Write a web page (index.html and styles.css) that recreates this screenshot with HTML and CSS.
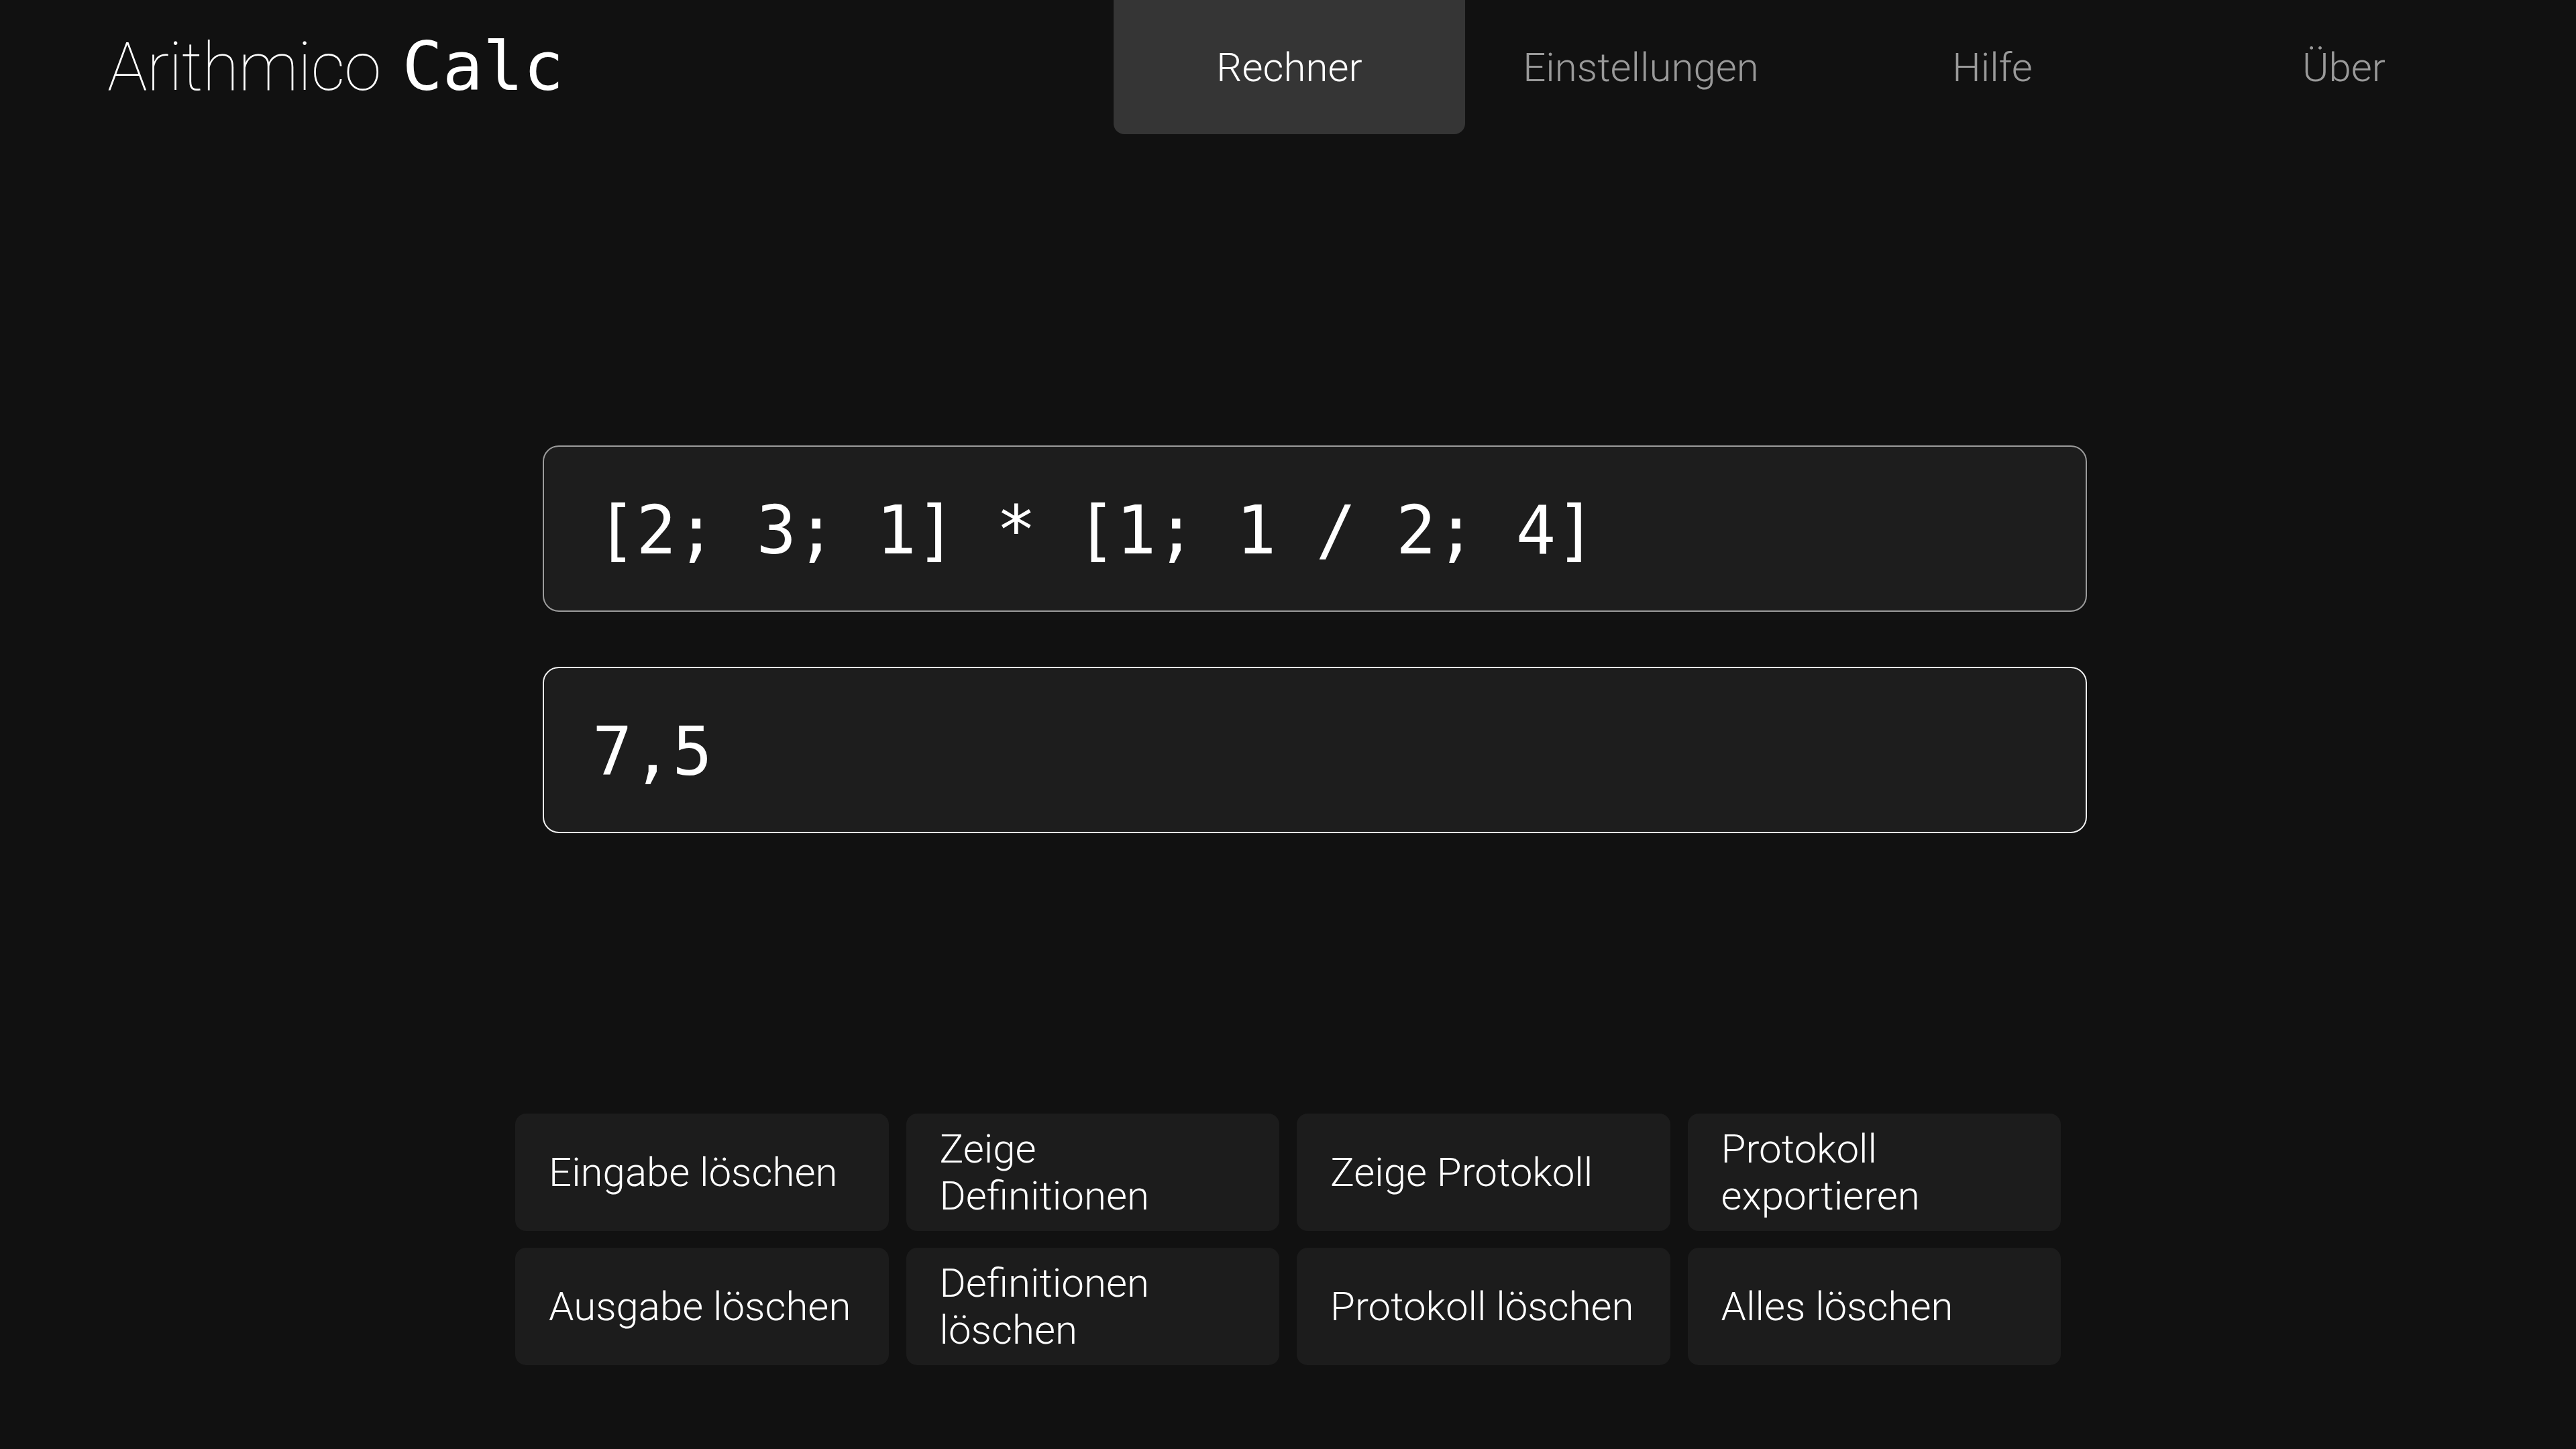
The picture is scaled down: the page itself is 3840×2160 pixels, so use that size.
FILE: index.html
```html
<!DOCTYPE html>
<html lang="de">
<head>
<meta charset="utf-8">
<title>Arithmico Calc</title>
<link rel="stylesheet" href="styles.css">
</head>
<body>
<header class="header">
  <div class="logo"><span class="logo-name">Arithmico</span> <span class="logo-calc">Calc</span></div>
  <nav class="nav">
    <a class="nav-item active">Rechner</a>
    <a class="nav-item">Einstellungen</a>
    <a class="nav-item">Hilfe</a>
    <a class="nav-item">Über</a>
  </nav>
</header>
<main class="main">
  <section class="displays">
    <div class="display input">[2; 3; 1] * [1; 1 / 2; 4]</div>
    <div class="display output">7,5</div>
  </section>
  <section class="actions">
    <button class="action">Eingabe löschen</button>
    <button class="action">Zeige Definitionen</button>
    <button class="action">Zeige Protokoll</button>
    <button class="action">Protokoll exportieren</button>
    <button class="action">Ausgabe löschen</button>
    <button class="action">Definitionen löschen</button>
    <button class="action">Protokoll löschen</button>
    <button class="action">Alles löschen</button>
  </section>
</main>
</body>
</html>
```
FILE: styles.css
```css
html, body {
  margin: 0;
  padding: 0;
}
body {
  background: #111111;
  color: #ffffff;
  font-family: Roboto, "Noto Sans", sans-serif;
  font-weight: 300;
  width: 3840px;
  height: 2160px;
  overflow: hidden;
}
.header {
  height: 200px;
  display: flex;
  align-items: center;
  justify-content: space-between;
  padding: 0 84px 0 160px;
}
.logo {
  font-size: 100px;
  line-height: 1;
  white-space: nowrap;
  color: #ffffff;
  word-spacing: 8px;
}
.logo-name {
  font-family: Roboto, sans-serif;
  font-weight: 100;
  letter-spacing: -1px;
}
.logo-calc {
  font-family: "DejaVu Sans Mono", monospace;
  font-weight: 400;
  font-size: 100px;
}
.nav {
  display: flex;
  align-self: stretch;
}
.nav-item {
  width: 524px;
  display: flex;
  align-items: center;
  justify-content: center;
  font-size: 60px;
  color: #9a9a9a;
  border-radius: 0 0 16px 16px;
}
.nav-item.active {
  background: #353535;
  color: #ffffff;
}
.main {
  display: flex;
  flex-direction: column;
  align-items: center;
}
.displays {
  width: 2304px;
  margin-top: 464px;
  display: flex;
  flex-direction: column;
  gap: 82px;
}
.display {
  box-sizing: border-box;
  height: 248px;
  margin-left: 41px;
  margin-right: -39px;
  background: #1d1d1d;
  border-radius: 24px;
  display: flex;
  align-items: center;
  padding: 4px 80px 0 78px;
  font-family: "DejaVu Sans Mono", monospace;
  font-size: 99px;
  font-weight: 400;
  color: #ffffff;
  white-space: pre;
}
.display.input {
  border: 2px solid #9c9c9c;
}
.display.output {
  border: 2px solid #f0f0f0;
  padding-left: 72px;
}
.actions {
  width: 2304px;
  margin-top: 418px;
  display: grid;
  grid-template-columns: repeat(4, 1fr);
  column-gap: 26px;
  row-gap: 25px;
}
.action {
  height: 175px;
  box-sizing: border-box;
  background: #1c1c1c;
  border: none;
  border-radius: 16px;
  padding: 0 50px;
  text-align: left;
  font-family: Roboto, sans-serif;
  font-weight: 300;
  font-size: 60px;
  line-height: 70px;
  color: #ffffff;
}
```
